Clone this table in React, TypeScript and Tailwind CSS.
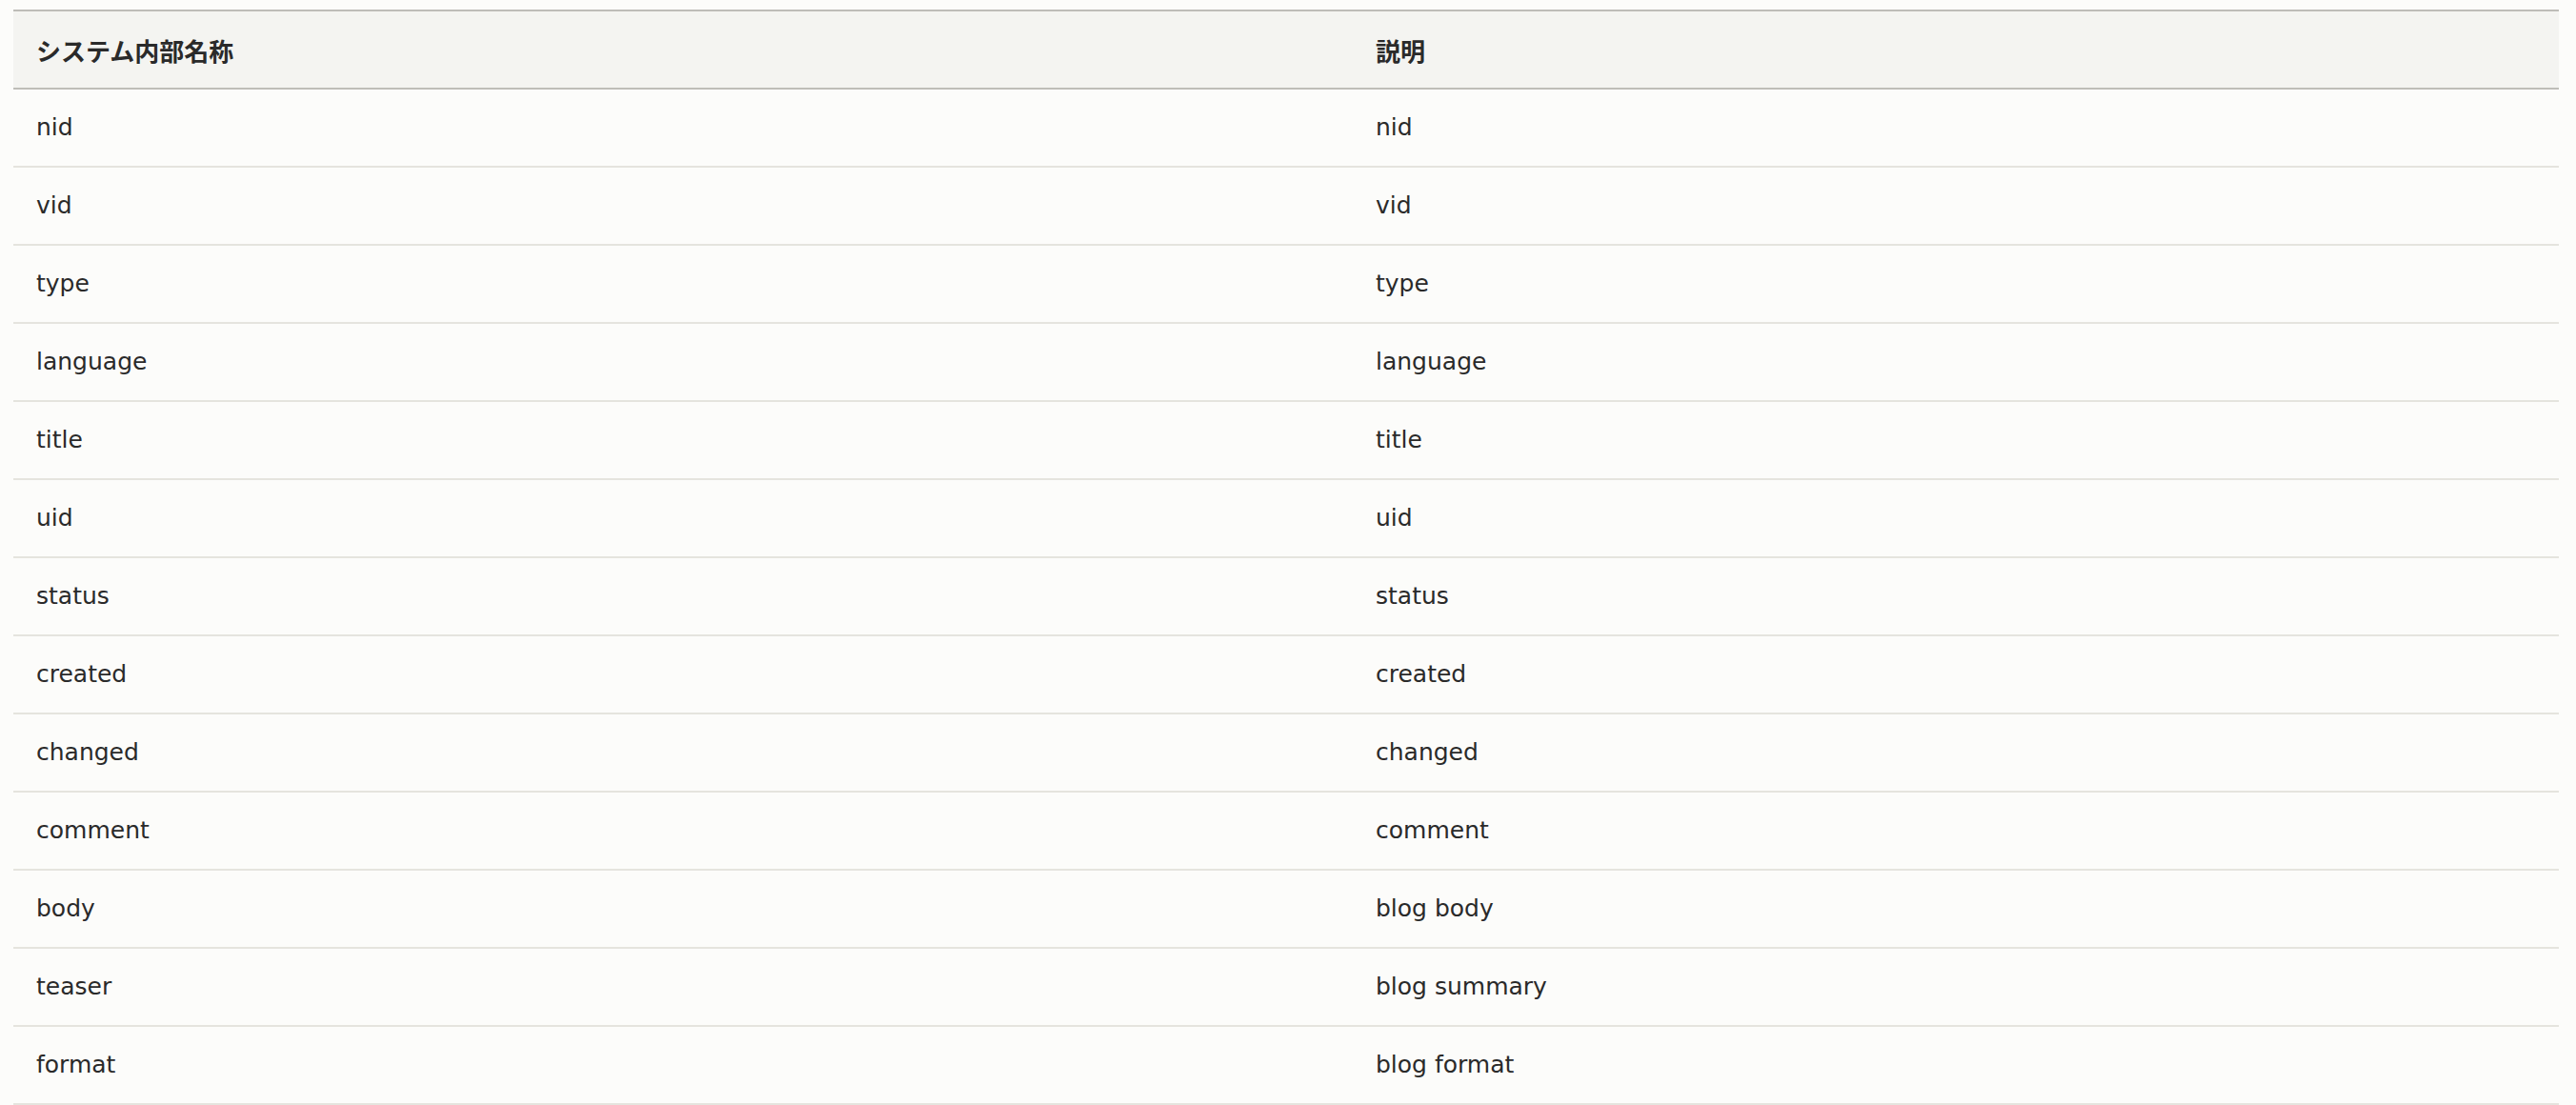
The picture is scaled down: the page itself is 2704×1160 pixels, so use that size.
const rows: [string, string][] = [
  ["nid", "nid"],
  ["vid", "vid"],
  ["type", "type"],
  ["language", "language"],
  ["title", "title"],
  ["uid", "uid"],
  ["status", "status"],
  ["created", "created"],
  ["changed", "changed"],
  ["comment", "comment"],
  ["body", "blog body"],
  ["teaser", "blog summary"],
  ["format", "blog format"],
];

const headCell =
  "h-[84px] border-y-2 border-[#bebdb8] bg-[#f4f4f1] pl-6 text-left text-[26px] font-bold";
const bodyCell = "h-[82px] border-b-2 border-[#e5e4de] pl-6";

export default function App() {
  return (
    <div className="min-h-[1160px] bg-[#fcfcfa] pt-[10px] pl-[14px]">
      <table
        className="w-[2672px] table-fixed border-separate border-spacing-0 text-[25px] text-[#2a2a2a]"
        style={{ fontFamily: '"DejaVu Sans", "Noto Sans CJK JP", sans-serif' }}
      >
        <colgroup>
          <col className="w-[1406px]" />
          <col />
        </colgroup>
        <thead>
          <tr>
            <th className={headCell} style={{ fontFamily: '"Noto Sans CJK JP", sans-serif' }}>
              システム内部名称
            </th>
            <th className={headCell} style={{ fontFamily: '"Noto Sans CJK JP", sans-serif' }}>
              説明
            </th>
          </tr>
        </thead>
        <tbody>
          {rows.map(([name, desc]) => (
            <tr key={name}>
              <td className={bodyCell}>{name}</td>
              <td className={bodyCell}>{desc}</td>
            </tr>
          ))}
        </tbody>
      </table>
    </div>
  );
}
